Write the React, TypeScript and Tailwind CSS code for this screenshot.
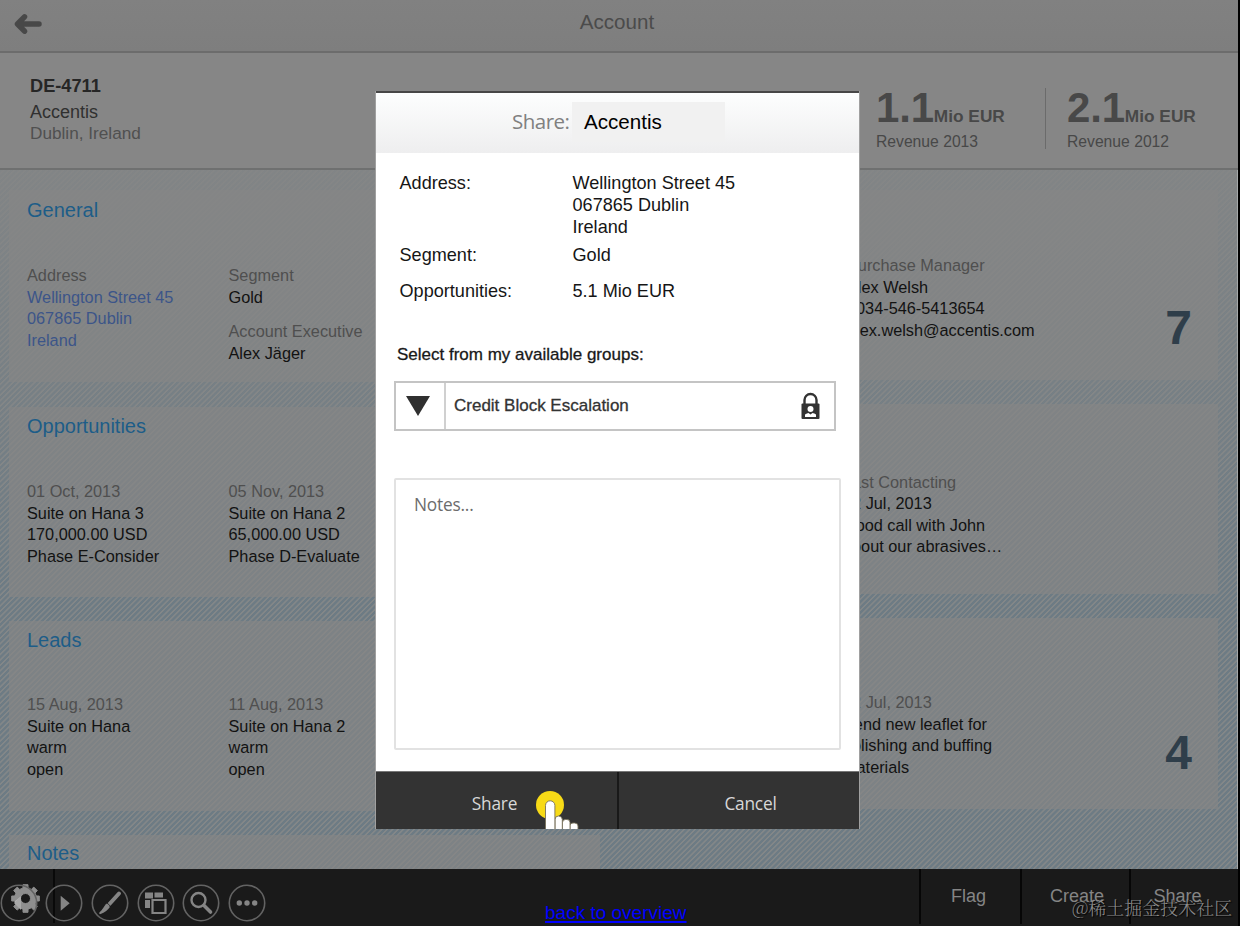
import React from 'react';

interface Entry {
    label: string;
    lines: string[];
    link?: boolean;
}

const general: Entry[][] = [
    [{ label: 'Address', lines: ['Wellington Street 45', '067865 Dublin', 'Ireland'], link: true }],
    [
        { label: 'Segment', lines: ['Gold'] },
        { label: 'Account Executive', lines: ['Alex Jäger'] },
    ],
];

const opportunities: Entry[][] = [
    [{ label: '01 Oct, 2013', lines: ['Suite on Hana 3', '170,000.00 USD', 'Phase E-Consider'] }],
    [{ label: '05 Nov, 2013', lines: ['Suite on Hana 2', '65,000.00 USD', 'Phase D-Evaluate'] }],
];

const leads: Entry[][] = [
    [{ label: '15 Aug, 2013', lines: ['Suite on Hana', 'warm', 'open'] }],
    [{ label: '11 Aug, 2013', lines: ['Suite on Hana 2', 'warm', 'open'] }],
];

function EntryBlock({ entry }: { entry: Entry }) {
    return (
        <div className="whitespace-nowrap text-[16.3px] leading-[21.6px]">
            <div className="text-[#4f4f4f]">{entry.label}</div>
            {entry.lines.map(line => (
                <div key={line} className={entry.link ? 'text-[#3c5589]' : 'text-[#121212]'}>{line}</div>
            ))}
        </div>
    );
}

// Section on the left half: heading plus two columns
function Section({ title, columns, className, bodyClass }: {
    title: string;
    columns: Entry[][];
    className: string;
    bodyClass?: string;
}) {
    return (
        <section className={`bg-[#858585]/65 pl-[18px] ${className}`}>
            <h2 className="text-xl leading-7 text-[#1d5d88]">{title}</h2>
            <div className={`flex ${bodyClass ?? ''}`}>
                {columns.map((entries, i) => (
                    <div key={i} className="flex w-[201.5px] flex-col gap-[13px]">
                        {entries.map(e => <EntryBlock key={e.label} entry={e} />)}
                    </div>
                ))}
            </div>
        </section>
    );
}

// Section on the right half, with an optional counter
function SideSection({ entry, count, className, countClass }: {
    entry: Entry;
    count?: number;
    className: string;
    countClass?: string;
}) {
    return (
        <section className={`flex justify-between bg-[#858585]/65 pr-[26px] ${className}`}>
            <EntryBlock entry={entry} />
            {count !== undefined && (
                <div className={`text-[48px] leading-[48px] font-bold text-[#2f3e4a] ${countClass ?? ''}`}>{count}</div>
            )}
        </section>
    );
}

function Revenue({ value, year }: { value: string; year: number }) {
    return (
        <div className="-mt-[2px] w-[128px] whitespace-nowrap text-[#484848]">
            <div className="flex items-baseline font-bold">
                <span className="text-[42px] leading-[43px] tracking-[-0.2px]">{value}</span>
                <span className="text-[17.3px]">Mio EUR</span>
            </div>
            <div className="text-[15.7px] leading-[24px]">Revenue {year}</div>
        </div>
    );
}

function RoundButton({ children }: { children?: React.ReactNode }) {
    return (
        <svg width="38" height="38" viewBox="0 0 38 38" fill="none" stroke="#636363" strokeWidth="1.6">
            <circle cx="19" cy="19" r="17.7" />
            {children}
        </svg>
    );
}

function SlideControls() {
    return (
        <div className="absolute left-[-0.500px] top-[883.5px] flex gap-[7.7px]">
            <RoundButton><path d="M21 12v14l-7-7z" fill="#a8a8a8" stroke="none" /></RoundButton>
            <RoundButton><path d="M15.7 11.8v15l9-7.5z" fill="#858585" stroke="none" /></RoundButton>
            <RoundButton>
                <path d="M28 9.500 18 20.500" stroke="#858585" strokeWidth="4" strokeLinecap="round" />
                <path d="M15.300 19.500l3.600 3.400c-1.800 2.800-4.800 5.300-9.900 7.300-1-.5-1-1.200-.4-1.900 3-2.800 4.400-5.800 6.700-8.800z" fill="#858585" stroke="none" />
                <path d="M15.700 18.500l4 4" stroke="#1a1a1a" strokeWidth="0.800" />
            </RoundButton>
            <RoundButton>
                <path d="M8 8.500h8v6H8zM17.500 8.500h8.500v5h-8.500zM8 16h5v8H8z" fill="#858585" stroke="none" />
                <path d="M15.500 16h13v13h-13z" fill="#1a1a1a" stroke="#858585" strokeWidth="2.200" />
            </RoundButton>
            <RoundButton>
                <circle cx="16.500" cy="16" r="7" stroke="#858585" strokeWidth="2.400" />
                <path d="M22 21.500l6.500 6.500" stroke="#858585" strokeWidth="3.600" strokeLinecap="round" />
            </RoundButton>
            <RoundButton>
                <g fill="#858585" stroke="none">
                    <circle cx="11.300" cy="19" r="2.700" />
                    <circle cx="19" cy="19" r="2.700" />
                    <circle cx="26.700" cy="19" r="2.700" />
                </g>
            </RoundButton>
        </div>
    );
}

function Gear() {
    return (
        <svg className="absolute left-[11px] top-[884px]" width="29" height="29" viewBox="-14.500 -14.500 29 29">
            <path
                fill="#8e8e8e"
                stroke="#8e8e8e"
                strokeWidth="1"
                strokeLinejoin="round"
                fillRule="evenodd"
                d="M-2.500-13.800h5v3.300l3.300 1.400 2.500-2.300 3.500 3.500-2.300 2.500 1.300 2.900h3v5h-3l-1.300 3.100 2.300 2.500-3.500 3.500-2.500-2.300-3.300 1.400v3.100h-5v-3.100l-3.300-1.400-2.500 2.300-3.500-3.500 2.300-2.500-1.300-3.100h-3v-5h3l1.300-2.900-2.300-2.500 3.500-3.500 2.500 2.300 3.300-1.400zM0-5a5 5 0 1 0 0 10 5 5 0 1 0 0-10z"
            />
            <path d="M-4.500-2v9.500l-6.500-4.500z" fill="#bdbdbd" />
        </svg>
    );
}

// Hand pointer on top of a click highlight, cut off by the modal's lower edge
function Pointer() {
    return (
        <svg className="absolute left-[158.500px] top-[16px]" width="46" height="41" viewBox="0 0 46 41">
            <circle cx="15" cy="17" r="14" fill="#f7da17" />
            <g fill="#ffffff" stroke="#77705a" strokeWidth="0.900">
                <path d="M35 43v-5.500q0-2.500 3-2.500h1.500q3.500 0 3.500 3V43z" />
                <path d="M27.500 43V34.500q0-3 3-3h1.500q3 0 3 3V43z" />
                <path d="M20 43V31.500q0-3.500 3.500-3.500t3.800 3.500V43z" />
                <path d="M10.500 43V17.500a4.700 4.700 0 0 1 9.400 0V43z" />
            </g>
        </svg>
    );
}

function ShareModal() {
    return (
        <div className="absolute left-[375px] top-[91px] flex h-[738px] w-[485px] flex-col border-r border-l border-[#a0a0a0] bg-white text-[#161616]">
            <header className="flex h-[62px] items-start border-t-2 border-[#474747] bg-linear-to-b from-[#fdfefe] to-[#eeeeef] pt-[9px]">
                <span className="w-[196px] pt-[5px] pr-[2.500px] text-right font-['Open_Sans',sans-serif] text-[20.5px] leading-[28px] tracking-[-0.5px] text-[#808080]">Share:</span>
                <div className="h-[40px] w-[153px] bg-[#f1f1f1] pl-[12px] text-[20.6px] leading-[39px] text-black">Accentis</div>
            </header>

            <dl className="grid grid-cols-[173px_1fr] pt-[19px] pl-[23.5px] text-[18.1px] leading-[22px]">
                <dt>Address:</dt>
                <dd>Wellington Street 45<br />067865 Dublin<br />Ireland</dd>
                <dt className="mt-[6px]">Segment:</dt>
                <dd className="mt-[6px]">Gold</dd>
                <dt className="mt-[14px]">Opportunities:</dt>
                <dd className="mt-[14px]">5.1 Mio EUR</dd>
            </dl>

            <div className="mt-[41px] pl-[21px] text-[17px] leading-[24px] [-webkit-text-stroke:0.300px_#222222]">
                Select from my available groups:
            </div>
            <div className="mt-[14px] ml-[18px] flex h-[50px] w-[442px] items-center border-2 border-[#c4c4c4]">
                <div className="flex h-full w-[50px] items-center justify-center border-r-2 border-[#d0d0d0] pr-[5px]">
                    <svg width="24" height="20" viewBox="0 0 24 20"><path d="M0 0h24L12 20z" fill="#303030" /></svg>
                </div>
                <span className="grow pl-[8px] text-[17px] text-[#333333] [-webkit-text-stroke:0.300px_#333333]">Credit Block Escalation</span>
                <svg className="mr-[14px]" width="19" height="28" viewBox="0 0 19 28">
                    <path d="M3.500 13V8a6 6 0 0 1 12 0v5" fill="none" stroke="#333333" strokeWidth="2.400" />
                    <rect x="0.500" y="11.500" width="18" height="15.500" rx="1" fill="#333333" />
                    <circle cx="9.500" cy="17" r="3" fill="#ffffff" />
                    <path d="M4 25v-2.500q2-1.500 3.500-1.500l2 1.500 2-1.500q2 0 3.500 1.500V25z" fill="#ffffff" />
                </svg>
            </div>

            <div className="mt-[47px] ml-[18px] h-[272px] w-[447px] rounded-xs border-2 border-[#e2e2e2] pt-[13px] pl-[18px] font-['Open_Sans',sans-serif] text-[17.300px] leading-6 tracking-[-0.200px] text-[#6c6c6c]">
                Notes...
            </div>

            <footer className="relative mt-auto flex h-[58px] border-t border-[#777777] bg-[#333333] font-['Open_Sans',sans-serif] text-[17.300px] tracking-[-0.200px] text-[#d8d8d8]">
                <button className="w-[243px] border-r-2 border-[#191919] pt-[6px] pr-[4px]">Share</button>
                <button className="grow pt-[6px] pl-[23px]">Cancel</button>
                <Pointer />
            </footer>
        </div>
    );
}

export default function App() {
    return (
        <div className="relative flex h-[926px] w-[1240px] flex-col overflow-hidden border-r-2 border-black bg-[#858585] font-['Liberation_Sans',Arial,sans-serif]">
            <header className="relative flex h-[53px] shrink-0 items-center justify-center border-b-2 border-[#6c6c6c] bg-linear-to-b from-[#818181] to-[#7e7e7e] pr-[4px] pb-[7px]">
                <svg className="absolute left-[14px] top-[13px]" width="29" height="22" viewBox="0 0 29 22" fill="none" stroke="#484848" strokeWidth="5.500" strokeLinecap="round" strokeLinejoin="round">
                    <path d="M10.500 3.800 3.500 11l7 7.200M5 11h20" />
                </svg>
                <h1 className="text-[20.600px] leading-[30px] text-[#4b4b4b]">Account</h1>
            </header>

            <div className="flex h-[117px] shrink-0 justify-between border-b-2 border-[#6f7070] bg-[#868686] pl-[30px]">
                <div className="pt-[21px] leading-[24px]">
                    <div className="text-[18.200px] font-bold text-[#262626]">DE-4711</div>
                    <div className="mt-[3px] text-[18px] leading-[22px] text-[#303030]">Accentis</div>
                    <div className="text-[17.200px] leading-[20px] text-[#505050]">Dublin, Ireland</div>
                </div>
                <div className="flex pt-[35px] pr-[43px]">
                    <Revenue value="1.1" year={2013} />
                    <div className="mr-[21px] ml-[41px] h-[61px] w-px bg-[#6b6b6b]" />
                    <Revenue value="2.1" year={2012} />
                </div>
            </div>

            <main className="flex h-[699px] shrink-0 gap-2 overflow-hidden border-r border-[#a5a9aa] bg-[linear-gradient(#858686d9,#85868600_60%),repeating-linear-gradient(135deg,#6d7b84_0,#6d7b84_1.700px,#838788_2.300px,#838788_3.300px,#6d7b84_3.820px)] pt-5 pl-[9px]">
                <div className="flex w-[591px] shrink-0 flex-col">
                    <Section title="General" columns={general} className="h-[192px] shrink-0 pt-[6px]" bodyClass="mt-[41.200px]" />
                    <Section title="Opportunities" columns={opportunities} className="mt-[25px] h-[190px] shrink-0 pt-[5px]" bodyClass="mt-[41px]" />
                    <Section title="Leads" columns={leads} className="mt-[24px] h-[190px] shrink-0 pt-[5px]" bodyClass="mt-[40px]" />
                    <Section title="Notes" columns={[]} className="mt-[24px] h-[34px] shrink-0 pt-[4px]" />
                </div>
                <div className="flex w-[610px] shrink-0 flex-col">
                    <SideSection
                        entry={{ label: 'Purchase Manager', lines: ['Alex Welsh', '0034-546-5413654', 'alex.welsh@accentis.com'] }}
                        count={7}
                        className="h-[190px] pt-[65.200px] pl-[239px]"
                        countClass="mt-[49px]"
                    />
                    <SideSection
                        entry={{ label: 'Last Contacting', lines: ['22 Jul, 2013', 'Good call with John', 'about our abrasives…'] }}
                        className="mt-[24px] h-[190px] pt-[67.500px] pl-[235px]"
                    />
                    <SideSection
                        entry={{ label: '22 Jul, 2013', lines: ['Send new leaflet for', 'polishing and buffing', 'materials'] }}
                        count={4}
                        className="mt-[24px] h-[191px] pt-[74.300px] pl-[235px]"
                        countClass="mt-[36.500px]"
                    />
                </div>
            </main>

            <footer className="flex h-[57px] shrink-0 items-start bg-[#1a1a1a] text-[18px] text-[#858585]">
                <div className="h-[54px] w-[55px] border-r-2 border-[#090909]" />
                <a href="#" className="ml-[490px] pt-[30px] text-[19px] leading-[28px] text-[#0000ff] underline decoration-2 underline-offset-2 [text-decoration-skip-ink:none]">back to overview</a>
                <nav className="ml-auto flex h-[55px] text-center leading-[54px]">
                    <div className="w-[101px] border-l-2 border-[#060606] pr-[4px]">Flag</div>
                    <div className="w-[109px] border-l-2 border-[#060606] pl-[3px]">Create</div>
                    <div className="w-[109px] border-l-2 border-[#060606] pr-[14px]">Share</div>
                </nav>
            </footer>

            <ShareModal />
            <Gear />
            <SlideControls />
            <div className="absolute top-[894px] left-[1072px] whitespace-nowrap font-['Noto_Serif_CJK_SC','Noto_Sans_CJK_SC',serif] text-[18px] leading-[26px] font-light text-[#8c8c8c] [text-shadow:1px_1px_1px_#000000]">
                @稀土掘金技术社区
            </div>
        </div>
    );
}
